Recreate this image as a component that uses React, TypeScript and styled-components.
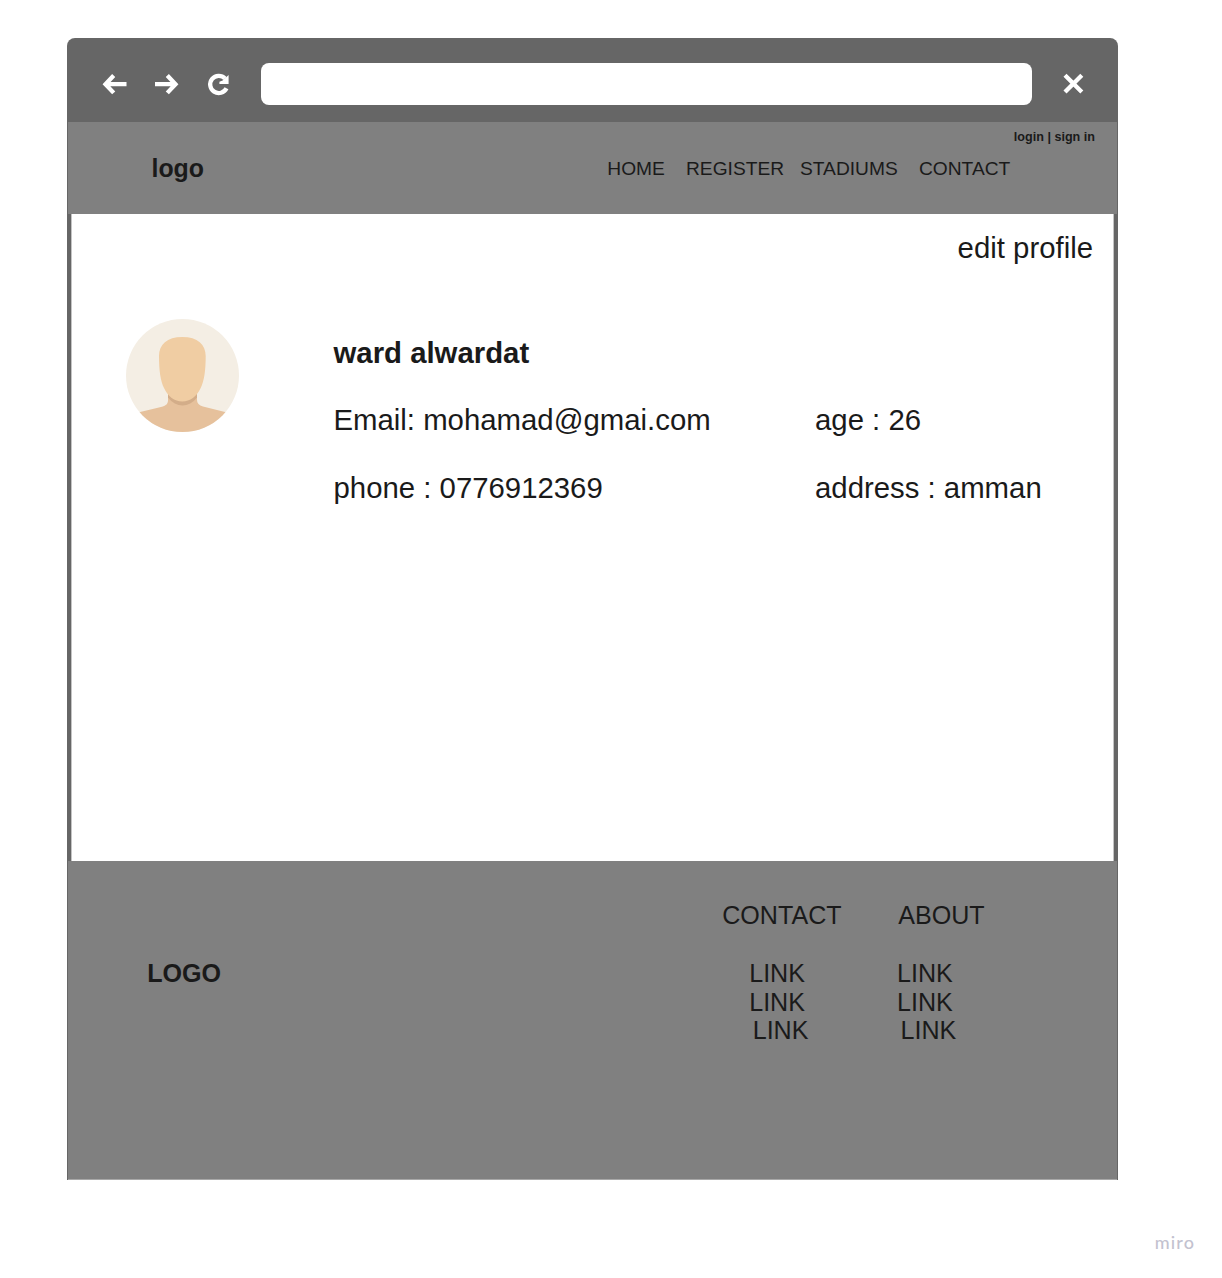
import React from "react";
import styled, { createGlobalStyle } from "styled-components";

const GlobalStyle = createGlobalStyle`
  body {
    margin: 0;
    background: #ffffff;
    color: #1a1a1a;
    font-family: "Liberation Sans", Arial, sans-serif;
  }
  * { box-sizing: border-box; }
`;

const Page = styled.div`
  width: 1222px;
  height: 1278px;
  padding: 38px 0 0 67px;
  display: flex;
  flex-direction: column;
  overflow: hidden;
  background: #ffffff;
`;

const BrowserWindow = styled.div`
  width: 1051px;
  height: 1142px;
  flex: none;
  display: flex;
  flex-direction: column;
  background: #666666;
  border-radius: 8px 8px 0 0;
  overflow: hidden;
`;

const Toolbar = styled.div`
  height: 84px;
  flex: none;
  display: flex;
  align-items: center;
  padding: 8px 32px 0 34px;
`;

const ToolIcon = styled.svg<{ $gap: number }>`
  width: 26px;
  height: 26px;
  flex: none;
  margin-right: ${(p) => p.$gap}px;
  fill: none;
  stroke: #ffffff;
  stroke-width: 4.3;
`;

const AddressBar = styled.div`
  width: 771px;
  height: 42px;
  margin-right: 28px;
  border-radius: 8px;
  background: #ffffff;
`;

const SiteHeader = styled.header`
  height: 92px;
  flex: none;
  display: flex;
  flex-direction: column;
  margin: 0 1px 0 0.5px;
  background: #808080;
`;

const Account = styled.div`
  align-self: flex-end;
  margin: 8px 22px 0 0;
  font-size: 12.6px;
  line-height: 14px;
  font-weight: bold;
  white-space: pre;
`;

const HeaderRow = styled.div`
  display: flex;
  align-items: flex-start;
  padding: 10px 0 0 84px;
`;

const Brand = styled.div`
  width: 455.8px;
  font-size: 24.9px;
  line-height: 28px;
  font-weight: bold;
`;

const Nav = styled.nav`
  display: flex;
  padding-top: 3.5px;
`;

const NavItem = styled.a<{ $width: number }>`
  width: ${(p) => p.$width}px;
  font-size: 19.2px;
  line-height: 22px;
`;

const Content = styled.main`
  height: 647px;
  flex: none;
  display: flex;
  flex-direction: column;
  margin: 0 4px;
  padding: 17px 20px 0 54px;
  background: #ffffff;
  border: solid #c4c4c4;
  border-width: 0 1px;
  font-size: 29.35px;
  line-height: 34px;
`;

const EditProfile = styled.a`
  align-self: flex-end;
`;

const Profile = styled.section`
  display: flex;
  padding-top: 54px;
`;

const Avatar = styled.svg`
  width: 114px;
  height: 114px;
  flex: none;
  margin-right: 93.5px;
`;

const Details = styled.div`
  display: grid;
  grid-template-columns: 481.5px auto;
  grid-auto-rows: 67.6px;
  padding-top: 16.5px;
  white-space: nowrap;
`;

const Name = styled.div`
  grid-column: 1 / -1;
  font-weight: bold;
`;

const Footer = styled.footer`
  height: 319px;
  flex: none;
  display: flex;
  margin: 0 1px 0 0.5px;
  padding: 40px 0 0 79.7px;
  background: #808080;
  border-bottom: 1px solid #a8a8a8;
  font-size: 25.1px;
  line-height: 28.6px;
`;

const FooterBrand = styled.div`
  width: 575px;
  padding-top: 58px;
  font-weight: bold;
`;

const FooterColumn = styled.div<{ $width: number; $indent: number }>`
  width: ${(p) => p.$width}px;
  ul {
    list-style: none;
    margin: 29.4px 0 0 ${(p) => p.$indent}px;
    padding: 0;
  }
  li:last-child { padding-left: 3.5px; }
`;

const Watermark = styled.div`
  align-self: flex-end;
  margin: 51px 27px 0 0;
  font: 500 18px/22px Lato, sans-serif;
  letter-spacing: 1.1px;
  color: #c3c2cf;
`;

const links = ["LINK", "LINK", "LINK"];

function LinkColumn({ title, width, indent }: { title: string; width: number; indent: number }) {
  return (
    <FooterColumn $width={width} $indent={indent}>
      <div>{title}</div>
      <ul>
        {links.map((label, i) => (
          <li key={i}>{label}</li>
        ))}
      </ul>
    </FooterColumn>
  );
}

export default function App() {
  return (
    <>
      <GlobalStyle />
      <Page>
        <BrowserWindow>
          <Toolbar>
            <ToolIcon $gap={26} viewBox="0 0 26 26">
              <path d="M25.500 13.200H4.500M12.700 4.500L4.500 13.200l8.200 8.700" />
            </ToolIcon>
            <ToolIcon $gap={26} viewBox="0 0 26 26">
              <path d="M2 13.200H22M14.300 4.500l8.200 8.700-8.200 8.700" />
            </ToolIcon>
            <ToolIcon $gap={29.5} viewBox="0 0 26 26">
              <path d="M21.500 17.300A8.600 8.600 0 1 1 20 7.500" />
              <path d="M23.600 4v8.900h-9.200v-2.200l3.200-1.200z" fill="#ffffff" stroke="none" />
            </ToolIcon>
            <AddressBar />
            <ToolIcon $gap={0} viewBox="0 0 26 26">
              <path d="M5 4.300l16.800 16.800M21.800 4.300L5 21.100" />
            </ToolIcon>
          </Toolbar>
          <SiteHeader>
            <Account>login | sign in</Account>
            <HeaderRow>
              <Brand>logo</Brand>
              <Nav>
                <NavItem $width={78.7}>HOME</NavItem>
                <NavItem $width={114}>REGISTER</NavItem>
                <NavItem $width={119}>STADIUMS</NavItem>
                <NavItem $width={95}>CONTACT</NavItem>
              </Nav>
            </HeaderRow>
          </SiteHeader>
          <Content>
            <EditProfile>edit profile</EditProfile>
            <Profile>
              <Avatar viewBox="0 0 114 114">
                <clipPath id="avatar-circle">
                  <circle cx="56.5" cy="56.5" r="56.5" />
                </clipPath>
                <g clipPath="url(#avatar-circle)">
                  <path fill="#f4eee4" d="M0 0h114v114H0z" />
                  <path fill="#e6c19c" d="M42 74v7c0 4-2 5.500-6 6.700L10 94v20h93V94L77 87.500c-4-1.200-6-3-6-6.500v-7z" />
                  <path fill="#d3ad89" d="M42 74v4.500c8 10.500 21 10.500 29 0V74z" />
                  <path fill="#f0cda3" d="M56.300 18C41 18 33 25.500 33 37c0 14 1.500 25 5 32 4 8.500 10.500 13.500 18.300 13.500S70.700 77.500 74.700 69c3.500-7 5-18 5-32 0-11.500-8-19-23.400-19z" />
                </g>
              </Avatar>
              <Details>
                <Name>ward alwardat</Name>
                <div>Email: mohamad@gmai.com</div>
                <div>age : 26</div>
                <div>phone : 0776912369</div>
                <div>address : amman</div>
              </Details>
            </Profile>
          </Content>
          <Footer>
            <FooterBrand>LOGO</FooterBrand>
            <LinkColumn title="CONTACT" width={176} indent={27} />
            <LinkColumn title="ABOUT" width={120} indent={-1.2} />
          </Footer>
        </BrowserWindow>
        <Watermark>miro</Watermark>
      </Page>
    </>
  );
}
